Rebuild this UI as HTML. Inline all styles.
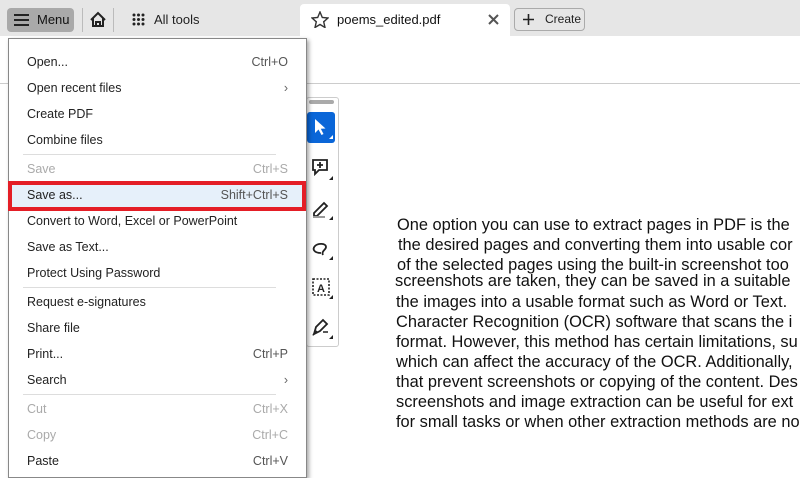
<!DOCTYPE html>
<html><head><meta charset="utf-8"><style>
*{margin:0;padding:0;box-sizing:border-box}
body{width:800px;height:465px;overflow:hidden;background:#fff;font-family:"Liberation Sans",sans-serif;position:relative;color:#222}
.abs{position:absolute}
.top{left:0;top:0;width:800px;height:36px;background:#e6e6e6}
.menubtn{left:7px;top:8px;width:67px;height:24px;background:#a9a9a9;border-radius:4px;font-size:13px;line-height:24px;padding-left:30px;color:#111}
.sep{width:1px;background:#bbb}
.tab{left:300px;top:4px;width:210px;height:32px;background:#fff;border-radius:4px 4px 0 0}
.create{left:514px;top:8px;width:71px;height:23px;border:1px solid #aaa;border-radius:4px;font-size:12px;line-height:21px;padding-left:30px;color:#222}
.hline{left:0;top:83px;width:800px;height:1px;background:#ccc}
.menu{left:8px;top:38px;width:299px;height:440px;background:#fff;border:1px solid #888;box-shadow:2px 2px 4px rgba(0,0,0,.35)}
.it{position:absolute;left:18px;right:18px;font-size:12.5px;color:#222;height:20px;line-height:20px}
.it span{position:absolute;right:0;color:#555}
.dis{color:#aaa!important}
.dis span{color:#aaa!important}
.ms{position:absolute;left:14px;right:30px;height:1px;background:#ddd}
.tb{left:306px;top:97px;width:33px;height:250px;border:1px solid #ccc;border-radius:3px;background:#fff}
.txt{font-size:16.4px;color:#111;white-space:nowrap;line-height:19px}
</style></head><body>
<div class="abs top"></div>
<div class="abs menubtn">Menu</div>
<svg class="abs" style="left:14px;top:13px" width="16" height="14"><g stroke="#222" stroke-width="2"><line x1="0" y1="2" x2="15" y2="2"/><line x1="0" y1="7" x2="15" y2="7"/><line x1="0" y1="12" x2="15" y2="12"/></g></svg>
<div class="abs sep" style="left:82px;top:8px;height:24px"></div>
<svg class="abs" style="left:89px;top:11px" width="18" height="17"><path d="M2 9 L9 2 L16 9 M4 7 V15 H14 V7 M7 15 V11 H11 V15" fill="none" stroke="#222" stroke-width="2"/></svg>
<div class="abs sep" style="left:113px;top:8px;height:24px"></div>
<svg class="abs" style="left:132px;top:13px" width="13" height="13"><g fill="#222"><circle cx="2" cy="2" r="1.5"/><circle cx="6.5" cy="2" r="1.5"/><circle cx="11" cy="2" r="1.5"/><circle cx="2" cy="6.5" r="1.5"/><circle cx="6.5" cy="6.5" r="1.5"/><circle cx="11" cy="6.5" r="1.5"/><circle cx="2" cy="11" r="1.5"/><circle cx="6.5" cy="11" r="1.5"/><circle cx="11" cy="11" r="1.5"/></g></svg>
<div class="abs" style="left:154px;top:12px;font-size:13px;color:#222">All tools</div>
<div class="abs tab"></div>
<svg class="abs" style="left:311px;top:11px" width="18" height="17"><path d="M9 1 L11.3 6.5 L17 7 L12.7 10.8 L14 16.5 L9 13.5 L4 16.5 L5.3 10.8 L1 7 L6.7 6.5 Z" fill="none" stroke="#333" stroke-width="1.4"/></svg>
<div class="abs" style="left:337px;top:12px;font-size:13px;color:#111">poems_edited.pdf</div>
<svg class="abs" style="left:488px;top:14px" width="11" height="11"><path d="M1 1 L10 10 M10 1 L1 10" stroke="#555" stroke-width="2"/></svg>
<div class="abs create">Create</div>
<svg class="abs" style="left:523px;top:14px" width="11" height="11"><path d="M5.5 0 V11 M0 5.5 H11" stroke="#222" stroke-width="1.6"/></svg>
<div class="abs hline"></div>

<div class="abs tb"></div>
<div class="abs" style="left:309px;top:100px;width:25px;height:4px;background:#aaa;border-radius:2px"></div>
<div class="abs" style="left:307px;top:112px;width:28px;height:31px;background:#0a66d8;border-radius:3px"></div>
<svg class="abs" style="left:313px;top:118px" width="20" height="22"><path d="M2 1 L2 15 L5.5 11.5 L8.5 17 L10.5 16 L7.8 10.7 L12.5 10.5 Z" fill="#fff"/><path d="M20 17 L20 21 L16 21 Z" fill="#fff"/></svg>
<svg class="abs" style="left:311px;top:158px" width="24" height="24"><path d="M2 2 H16 V12 H8 L4 16 V12 H2 Z" fill="none" stroke="#222" stroke-width="1.8"/><path d="M9 4 V10 M6 7 H12" stroke="#222" stroke-width="1.8"/><path d="M22 18 V22 H18 Z" fill="#222"/></svg>
<svg class="abs" style="left:311px;top:198px" width="24" height="24"><path d="M3 15 L13 5 L16 8 L6 18 H3 Z" fill="none" stroke="#222" stroke-width="1.8"/><path d="M2 19 H14" stroke="#999" stroke-width="2"/><path d="M22 18 V22 H18 Z" fill="#222"/></svg>
<svg class="abs" style="left:311px;top:238px" width="24" height="24"><path d="M10 15 C3 15 1 11 4 8 C7 5 15 5 15 9 C15 12 10 13 12 17" fill="none" stroke="#222" stroke-width="1.8"/><path d="M22 18 V22 H18 Z" fill="#222"/></svg>
<svg class="abs" style="left:311px;top:277px" width="24" height="24"><rect x="2" y="2" width="16" height="16" fill="none" stroke="#222" stroke-width="1.6" stroke-dasharray="2 1.5"/><text x="6" y="15" font-size="11" font-weight="bold" font-family="Liberation Sans" fill="#222">A</text><path d="M22 18 V22 H18 Z" fill="#222"/></svg>
<svg class="abs" style="left:311px;top:317px" width="24" height="24"><path d="M3 17 L5 10 L12 3 L16 7 L9 14 Z" fill="none" stroke="#222" stroke-width="1.8"/><path d="M2 18 L6 14 M12 15 L17 15" stroke="#222" stroke-width="1.6"/><path d="M22 18 V22 H18 Z" fill="#222"/></svg>

<div class="abs txt" style="left:397px;top:216px">One option you can use to extract pages in PDF is the</div>
<div class="abs txt" style="left:398px;top:236px">the desired pages and converting them into usable cor</div>
<div class="abs txt" style="left:397px;top:256px">of the selected pages using the built-in screenshot too</div>
<div class="abs txt" style="left:395px;top:272px">screenshots are taken, they can be saved in a suitable</div>
<div class="abs txt" style="left:396px;top:293px">the images into a usable format such as Word or Text.</div>
<div class="abs txt" style="left:396px;top:313px">Character Recognition (OCR) software that scans the i</div>
<div class="abs txt" style="left:396px;top:333px">format. However, this method has certain limitations, su</div>
<div class="abs txt" style="left:396px;top:353px">which can affect the accuracy of the OCR. Additionally,</div>
<div class="abs txt" style="left:396px;top:373px">that prevent screenshots or copying of the content. Des</div>
<div class="abs txt" style="left:396px;top:393px">screenshots and image extraction can be useful for ext</div>
<div class="abs txt" style="left:396px;top:413px">for small tasks or when other extraction methods are no</div>

<div class="abs menu">
<div class="it" style="top:13px">Open...<span>Ctrl+O</span></div>
<div class="it" style="top:39px">Open recent files<span style="color:#666">›</span></div>
<div class="it" style="top:65px">Create PDF</div>
<div class="it" style="top:91px">Combine files</div>
<div class="ms" style="top:115px"></div>
<div class="it dis" style="top:120px">Save<span>Ctrl+S</span></div>
<div style="position:absolute;left:-1px;top:142px;width:298px;height:30px;border:4px solid #e41e26;background:#e6f0fa"></div>
<div class="it" style="top:146px">Save as...<span>Shift+Ctrl+S</span></div>
<div class="it" style="top:172px">Convert to Word, Excel or PowerPoint</div>
<div class="it" style="top:198px">Save as Text...</div>
<div class="it" style="top:224px">Protect Using Password</div>
<div class="ms" style="top:248px"></div>
<div class="it" style="top:253px">Request e-signatures</div>
<div class="it" style="top:279px">Share file</div>
<div class="it" style="top:305px">Print...<span>Ctrl+P</span></div>
<div class="it" style="top:331px">Search<span style="color:#666">›</span></div>
<div class="ms" style="top:355px"></div>
<div class="it dis" style="top:360px">Cut<span>Ctrl+X</span></div>
<div class="it dis" style="top:386px">Copy<span>Ctrl+C</span></div>
<div class="it" style="top:412px">Paste<span>Ctrl+V</span></div>
</div>
</body></html>
